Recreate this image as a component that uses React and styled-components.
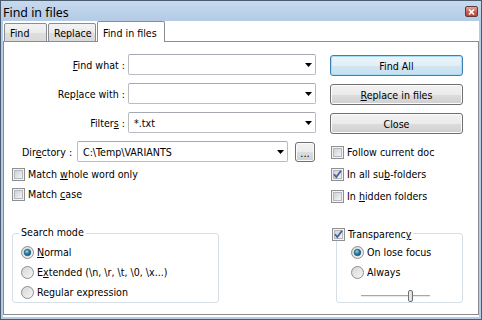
import React from "react";
import styled, { createGlobalStyle } from "styled-components";

const Global = createGlobalStyle`
  html, body { margin: 0; padding: 0; background: #fff; }
  * { box-sizing: border-box; }
`;

const Win = styled.div`
  width: 482px;
  height: 320px;
  border: 1px solid #4a5b6f;
  background: #b6cce5;
  display: flex;
  flex-direction: column;
  padding: 0 2px 2px;
  font-family: "DejaVu Sans Condensed", "DejaVu Sans", sans-serif;
  font-stretch: semi-condensed;
  font-size: 10.6px;
  color: #000;
  overflow: hidden;
`;

const TitleBar = styled.div`
  height: 20px;
  margin: 0 -2px;
  padding: 2px 3px 0 2px;
  display: flex;
  align-items: center;
  justify-content: space-between;
  background: linear-gradient(#c6d9ee, #b4cbe5);
`;

const Title = styled.span`
  font-family: "Noto Sans", "Open Sans", sans-serif;
  font-stretch: normal;
  font-size: 12.4px;
  color: #000;
`;

const CloseBtn = styled.div`
  width: 13px;
  height: 11px;
  margin-top: -1px;
  border: 1px solid #5e3a38;
  border-radius: 2px;
  background: linear-gradient(#e3a99f, #c65e4f 55%, #b8483a);
  display: flex;
  align-items: center;
  justify-content: center;
`;

const Client = styled.div`
  flex: 1;
  background: #fff;
  display: flex;
  flex-direction: column;
  padding: 0 0 2px 0;
  min-height: 0;
`;

const TabStrip = styled.div`
  height: 21px;
  margin-bottom: -1px;
  padding-left: 1px;
  display: flex;
  align-items: flex-end;
  position: relative;
  z-index: 1;
`;

const Tab = styled.div`
  width: ${(p) => p.$w}px;
  height: ${(p) => (p.$active ? 21 : 19)}px;
  margin-left: ${(p) => (p.$first ? 0 : 1)}px;
  padding: 2px 0 0 5px;
  border: 1px solid #898c95;
  border-bottom: ${(p) => (p.$active ? "none" : "1px solid #898c95")};
  border-radius: 2px 2px 0 0;
  background: ${(p) =>
    p.$active ? "#fff" : "linear-gradient(#f3f3f3, #ebebeb 50%, #dedede 51%, #d9d9d9)"};
  display: flex;
  align-items: center;
  line-height: 13px;
  white-space: nowrap;
`;

const Panel = styled.div`
  flex: 1;
  border: 1px solid #898c95;
  background: #fff;
  display: grid;
  grid-template-columns: 326px 133px;
  align-items: start;
  position: relative;
  z-index: 0;
`;

const LeftCol = styled.div`
  padding-top: 12px;
  display: flex;
  flex-direction: column;
`;

const RightCol = styled.div`
  padding-top: 13px;
  display: flex;
  flex-direction: column;
`;

const FieldGrid = styled.div`
  display: grid;
  grid-template-columns: 124px 188px;
  grid-auto-rows: 21px;
  row-gap: 8px;
  align-items: center;
`;

const Label = styled.span`
  text-align: right;
  padding-right: 3px;
  white-space: nowrap;
`;

const Combo = styled.div`
  width: ${(p) => p.$w}px;
  height: 21px;
  border: 1px solid #b9bcc4;
  border-top-color: #a6a9b1;
  border-radius: 2px;
  padding: 0 3px 0 5px;
  display: flex;
  align-items: center;
  justify-content: space-between;
  white-space: nowrap;
  background: #fff;
`;

const DirRow = styled.div`
  margin-top: 8px;
  padding-left: 18px;
  height: 21px;
  display: flex;
  align-items: center;
`;

const DirLabel = styled.span`
  width: 55px;
  white-space: nowrap;
`;

const SmallBtn = styled.div`
  width: 20px;
  height: 20px;
  margin-left: 7px;
  border: 1px solid #707070;
  border-radius: 3px;
  background: linear-gradient(#f2f2f2, #ebebeb 50%, #dddddd 51%, #cfcfcf);
  box-shadow: inset 0 0 0 1px #fbfbfb;
  display: flex;
  align-items: flex-end;
  justify-content: center;
  padding-bottom: 3px;
  line-height: 8px;
  font-size: 11px;
`;

const CheckList = styled.div`
  margin-top: ${(p) => p.$mt}px;
  padding-left: ${(p) => p.$pl}px;
  display: flex;
  flex-direction: column;
  gap: ${(p) => p.$gap}px;
`;

const Row = styled.div`
  height: 13px;
  display: flex;
  align-items: center;
  gap: 3px;
  white-space: nowrap;
  line-height: 13px;
`;

const Group = styled.div`
  position: relative;
  margin-top: ${(p) => p.$mt}px;
  margin-left: ${(p) => p.$ml}px;
  width: ${(p) => p.$w}px;
  height: 70px;
  border: 1px solid #d5dfe5;
  border-radius: 3px;
  padding: 12px 0 0 ${(p) => p.$pl}px;
  display: flex;
  flex-direction: column;
  gap: 7px;
`;

const Legend = styled.div`
  position: absolute;
  top: ${(p) => p.$top}px;
  left: ${(p) => p.$left}px;
  background: #fff;
  padding: 0 2px;
  height: 13px;
  line-height: 13px;
  display: flex;
  align-items: center;
  gap: 3px;
`;

const Button = styled.div`
  width: 133px;
  height: 21px;
  border: 1px solid ${(p) => (p.$def ? "#3c7fb1" : "#707070")};
  border-radius: 3px;
  background: ${(p) =>
    p.$def
      ? "linear-gradient(#eaf4fa, #e2eff7 50%, #d2e6f2 51%, #c8dfee)"
      : "linear-gradient(#f2f2f2, #ebebeb 50%, #dddddd 51%, #cfcfcf)"};
  box-shadow: inset 0 0 0 1px ${(p) => (p.$def ? "#a9dcf6" : "#fcfcfc")};
  display: flex;
  align-items: center;
  justify-content: center;
  white-space: nowrap;
`;

const ButtonStack = styled.div`
  display: flex;
  flex-direction: column;
  gap: 8px;
`;

const Acc = styled.span`
  text-decoration: underline;
  text-underline-offset: 1px;
`;

const SliderTrack = styled.div`
  position: relative;
  margin-top: 4px;
  margin-left: 10px;
  width: 69px;
  height: 12px;
`;

const TrackLine = styled.div`
  position: absolute;
  left: 0;
  right: 0;
  top: 5px;
  height: 2px;
  border-top: 1px solid #a8a8a8;
  border-bottom: 1px solid #e9e9e9;
`;

const Thumb = styled.div`
  position: absolute;
  left: 47px;
  top: 0;
  width: 5px;
  height: 12px;
  border: 1px solid #707070;
  border-radius: 2px;
  background: linear-gradient(90deg, #f4f4f4, #d9d9d9);
`;

const Arrow = () => (
  <svg width="7" height="4" viewBox="0 0 7 4">
    <polygon points="0,0 7,0 3.5,4" fill="#000" />
  </svg>
);

const CheckBox = ({ checked }) => (
  <svg width="13" height="13" viewBox="0 0 13 13" style={{ flex: "none" }}>
    <defs>
      <linearGradient id="cbg" x1="0" y1="0" x2="1" y2="1">
        <stop offset="0" stopColor="#cbcfd5" />
        <stop offset="1" stopColor="#f6f6f6" />
      </linearGradient>
    </defs>
    <rect x="0.5" y="0.5" width="12" height="12" fill="#f4f4f4" stroke="#8e8f8f" />
    <rect x="2.5" y="2.5" width="8" height="8" fill="url(#cbg)" stroke="#b4b9c0" />
    {checked && (
      <path d="M3 6.2 L5.3 9 L10 2.8" fill="none" stroke="#4a5f97" strokeWidth="1.8" />
    )}
  </svg>
);

const Radio = ({ checked }) => (
  <svg width="13" height="13" viewBox="0 0 13 13" style={{ flex: "none" }}>
    <defs>
      <linearGradient id="rbg" x1="0" y1="0" x2="1" y2="1">
        <stop offset="0" stopColor="#d4d4d4" />
        <stop offset="1" stopColor="#f7f7f7" />
      </linearGradient>
      <radialGradient id="rdot" cx="0.4" cy="0.35" r="0.7">
        <stop offset="0" stopColor="#9fe0f6" />
        <stop offset="0.45" stopColor="#2e84ad" />
        <stop offset="1" stopColor="#174e6c" />
      </radialGradient>
    </defs>
    <circle cx="6.5" cy="6.5" r="6" fill="url(#rbg)" stroke="#8e8f8f" />
    {checked && <circle cx="6.5" cy="6.5" r="3.3" fill="url(#rdot)" stroke="#1d4f6b" strokeWidth="0.6" />}
  </svg>
);

export default function App() {
  return (
    <>
      <Global />
      <Win>
        <TitleBar>
          <Title>Find in files</Title>
          <CloseBtn>
            <svg width="7" height="6" viewBox="0 0 7 6">
              <path d="M1 0.5 L6 5.5 M6 0.5 L1 5.5" stroke="#fff" strokeWidth="1.6" />
            </svg>
          </CloseBtn>
        </TitleBar>
        <Client>
          <TabStrip>
            <Tab $w={43} $first>Find</Tab>
            <Tab $w={48}>Replace</Tab>
            <Tab $w={68} $active>Find in files</Tab>
          </TabStrip>
          <Panel>
            <LeftCol>
              <FieldGrid>
                <Label>
                  <Acc>F</Acc>ind what&nbsp;:
                </Label>
                <Combo $w={188}>
                  <span />
                  <Arrow />
                </Combo>
                <Label>
                  Rep<Acc>l</Acc>ace with&nbsp;:
                </Label>
                <Combo $w={188}>
                  <span />
                  <Arrow />
                </Combo>
                <Label>
                  Filter<Acc>s</Acc>&nbsp;:
                </Label>
                <Combo $w={188}>
                  <span>*.txt</span>
                  <Arrow />
                </Combo>
              </FieldGrid>
              <DirRow>
                <DirLabel>
                  Dir<Acc>e</Acc>ctory&nbsp;:
                </DirLabel>
                <Combo $w={211}>
                  <span>C:\Temp\VARIANTS</span>
                  <Arrow />
                </Combo>
                <SmallBtn>...</SmallBtn>
              </DirRow>
              <CheckList $mt={6} $pl={8} $gap={7}>
                <Row>
                  <CheckBox />
                  <span>
                    Match <Acc>w</Acc>hole word only
                  </span>
                </Row>
                <Row>
                  <CheckBox />
                  <span>
                    Match <Acc>c</Acc>ase
                  </span>
                </Row>
              </CheckList>
              <Group $mt={32} $ml={8} $w={207} $pl={8}>
                <Legend $top={-8} $left={6}>Search mode</Legend>
                <Row>
                  <Radio checked />
                  <span>
                    <Acc>N</Acc>ormal
                  </span>
                </Row>
                <Row>
                  <Radio />
                  <span>
                    E<Acc>x</Acc>tended (\n, \r, \t, \0, \x...)
                  </span>
                </Row>
                <Row>
                  <Radio />
                  <span>
                    Re<Acc>g</Acc>ular expression
                  </span>
                </Row>
              </Group>
            </LeftCol>
            <RightCol>
              <ButtonStack>
                <Button $def>Find All</Button>
                <Button>
                  <span>
                    <Acc>R</Acc>eplace in files
                  </span>
                </Button>
                <Button>Close</Button>
              </ButtonStack>
              <CheckList $mt={12} $pl={1} $gap={9}>
                <Row>
                  <CheckBox />
                  <span>Follow current doc</span>
                </Row>
                <Row>
                  <CheckBox checked />
                  <span>
                    In all su<Acc>b</Acc>-folders
                  </span>
                </Row>
                <Row>
                  <CheckBox />
                  <span>
                    In <Acc>h</Acc>idden folders
                  </span>
                </Row>
              </CheckList>
              <Group $mt={30} $ml={6} $w={127} $pl={14}>
                <Legend $top={-6} $left={-7}>
                  <CheckBox checked />
                  <span>
                    Transparenc<Acc>y</Acc>
                  </span>
                </Legend>
                <Row>
                  <Radio checked />
                  <span>On lose focus</span>
                </Row>
                <Row>
                  <Radio />
                  <span>Always</span>
                </Row>
                <SliderTrack>
                  <TrackLine />
                  <Thumb />
                </SliderTrack>
              </Group>
            </RightCol>
          </Panel>
        </Client>
      </Win>
    </>
  );
}
